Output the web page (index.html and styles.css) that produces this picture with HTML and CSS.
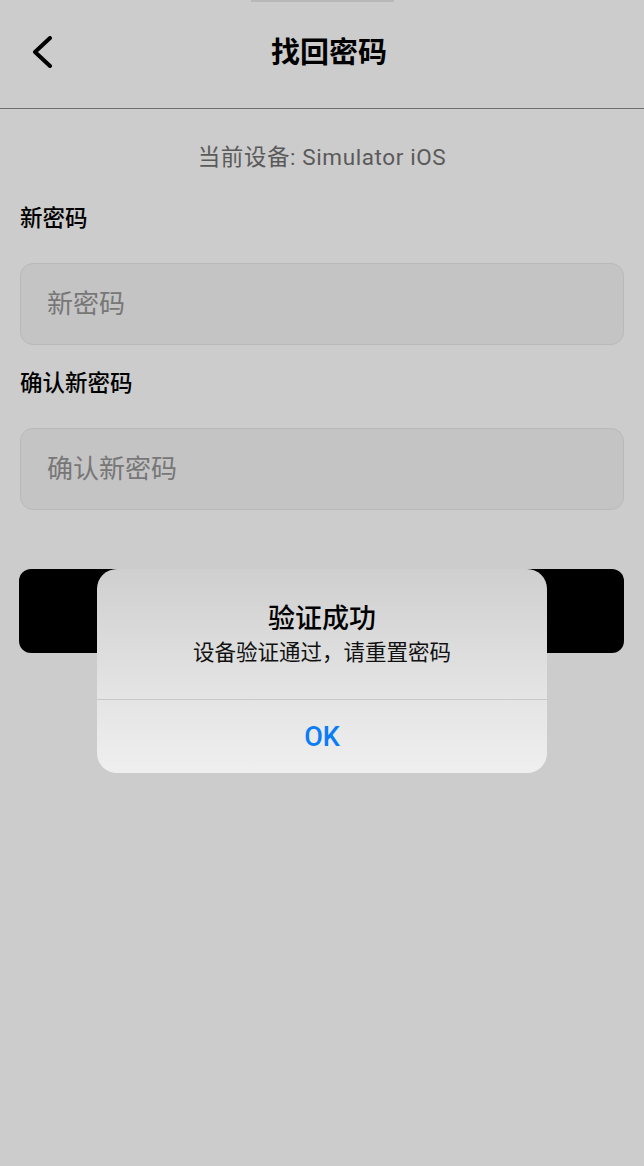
FILE: index.html
```html
<!DOCTYPE html>
<html>
<head>
    <title>找回密码</title>
    <link rel="stylesheet" href="styles.css">
</head>
<body>
    <div class="grabber"></div>
    <div class="header">
        <div class="back-btn">
            <svg width="24" height="32" viewBox="0 0 24 32">
                <polyline points="19,2 4,16 19,30" fill="none" stroke="#000" stroke-width="4" stroke-linecap="round" stroke-linejoin="round"/>
            </svg>
        </div>
        <h2>找回密码</h2>
    </div>

    <div class="container">
        <p class="device">当前设备: Simulator iOS</p>

        <form id="reset_form">
            <label for="new_pwd">新密码</label>
            <input type="password" id="new_pwd" placeholder="新密码">

            <label for="confirm_pwd" class="second">确认新密码</label>
            <input type="password" id="confirm_pwd" placeholder="确认新密码">

            <div class="submit-wrapper">
                <button type="button" id="submit_btn" aria-label="重置密码"></button>
            </div>
        </form>
    </div>

    <div class="alert">
        <div class="alert-body">
            <div class="alert-title">验证成功</div>
            <div class="alert-msg">设备验证通过，请重置密码</div>
        </div>
        <div class="alert-action">OK</div>
    </div>
</body>
</html>
```

FILE: styles.css
```css
body {
    margin: 0;
    height: 1166px;
    background-color: #cccccc;
    font-family: Roboto, "Noto Sans CJK SC", sans-serif;
    position: relative;
    overflow: hidden;
}

.grabber {
    width: 143px;
    height: 2px;
    margin: 0 auto;
    background-color: #b8b8b8;
}

.header {
    display: flex;
    align-items: center;
    justify-content: center;
    position: relative;
    height: 102px;
    padding-bottom: 4px;
    padding-left: 14px;
    border-bottom: 1px solid #6f6f6f;
}

.back-btn {
    position: absolute;
    left: 31px;
    top: 34px;
    width: 24px;
    height: 32px;
}

.back-btn svg {
    display: block;
}

h2 {
    margin: 0;
    font-size: 29px;
    font-weight: 700;
    line-height: 36px;
    color: #000;
}

.container {
    padding: 0 20px;
}

.device {
    margin: 34px 0 0;
    text-align: center;
    font-size: 22.5px;
    letter-spacing: 0.6px;
    line-height: 28px;
    color: #5a5a5a;
}

form {
    display: flex;
    flex-direction: column;
}

label {
    margin-top: 32px;
    font-size: 22.5px;
    font-weight: 500;
    line-height: 30px;
    color: #000;
}

label.second {
    margin-top: 23px;
}

input[type="password"] {
    margin-top: 30px;
    height: 82px;
    box-sizing: border-box;
    padding: 0 26px;
    border: 1px solid #b9b9b9;
    border-radius: 13px;
    background-color: #c4c4c4;
    font-family: Roboto, "Noto Sans CJK SC", sans-serif;
    font-size: 26px;
    outline: none;
}

input::placeholder {
    color: #777;
}

.submit-wrapper {
    margin-top: 59px;
    margin-left: -1px;
}

#submit_btn {
    display: block;
    width: 100%;
    height: 84px;
    background-color: #000;
    border: none;
    border-radius: 12px;
}

.alert {
    position: absolute;
    left: 97px;
    top: 569px;
    width: 450px;
    height: 204px;
    border-radius: 20px;
    overflow: hidden;
    background: linear-gradient(to bottom, #cfcfcf 0%, #e2e2e2 55%, #efefef 100%);
    display: flex;
    flex-direction: column;
}

.alert-body {
    height: 131px;
    box-sizing: border-box;
    padding-top: 34px;
    text-align: center;
    border-bottom: 1px solid #c9c9c9;
}

.alert-title {
    font-size: 27px;
    font-weight: 500;
    line-height: 32px;
    color: #000;
}

.alert-msg {
    margin-top: 4px;
    font-size: 21.5px;
    line-height: 28px;
    color: #111;
}

.alert-action {
    flex: 1;
    display: flex;
    align-items: center;
    justify-content: center;
    font-size: 27px;
    font-weight: 500;
    color: #0a7cf6;
}
```
